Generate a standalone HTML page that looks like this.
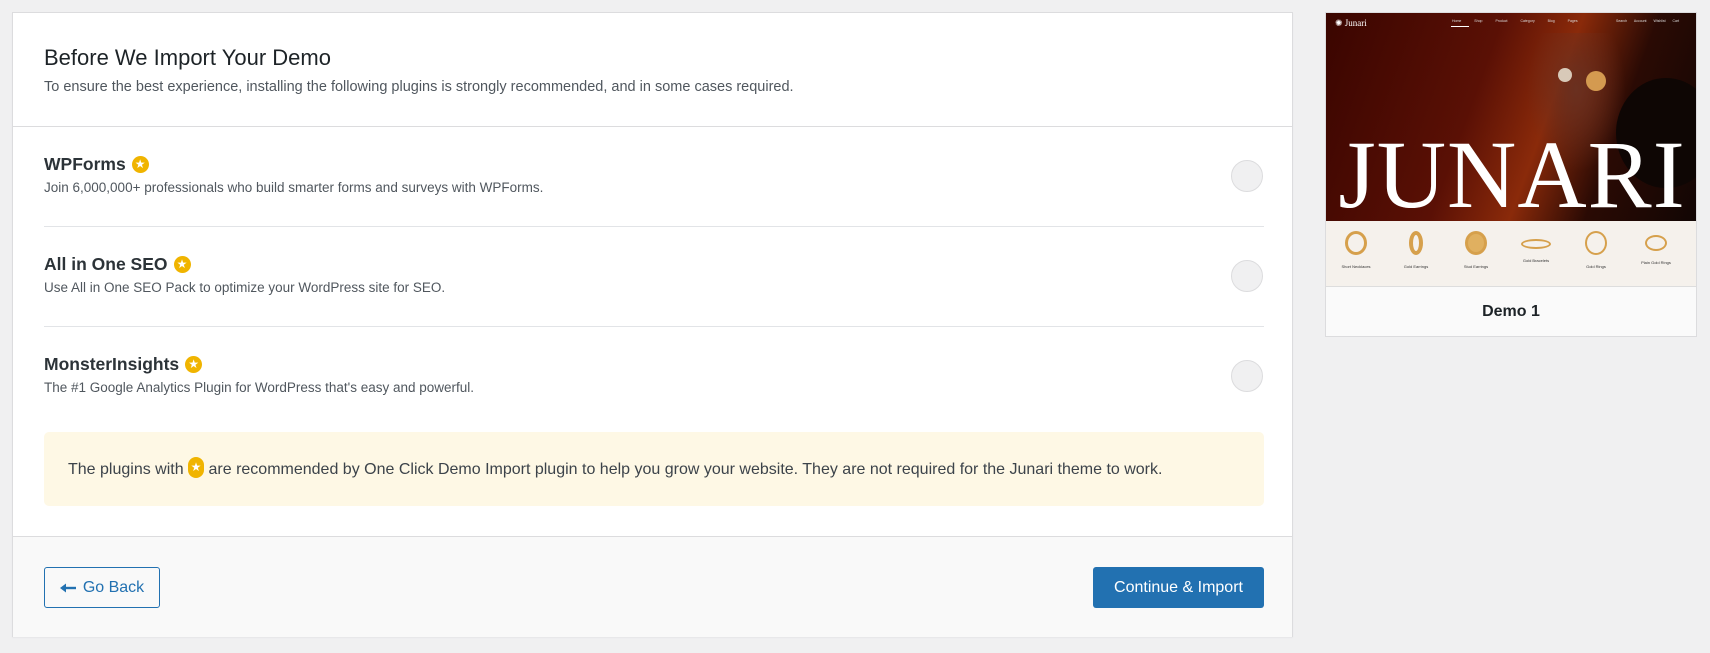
<!DOCTYPE html>
<html><head><meta charset="utf-8"><style>
*{box-sizing:border-box;margin:0;padding:0}
body{width:1710px;height:653px;background:#f0f0f1;font-family:"Liberation Sans",sans-serif;position:relative;overflow:hidden;color:#1d2327}
.panel{position:absolute;left:12px;top:12px;width:1281px;height:625px;background:#fff;border:1px solid #dcdcde;box-shadow:0 1px 1px rgba(0,0,0,.04)}
.abs{position:absolute}
h1{position:absolute;left:31px;top:32px;font-size:22px;font-weight:400;color:#1d2327}
.sub{position:absolute;left:31px;top:66px;font-size:14.5px;color:#50575e}
.hr{position:absolute;height:1px;background:#e2e4e7}
.pt{position:absolute;left:31px;font-size:17.5px;font-weight:bold;color:#2c3338;display:flex;align-items:center;gap:6px}
.pd{position:absolute;left:31px;font-size:13.5px;color:#50575e}
.star{display:inline-block;width:17px;height:17px;border-radius:50%;background:#f0b400;position:relative}
.star:after{content:"★";position:absolute;left:0;right:0;top:1px;text-align:center;color:#fff;font-size:12px;line-height:15px;font-weight:normal}
.radio{position:absolute;left:1218px;width:32px;height:32px;border-radius:50%;background:#f0f0f1;border:1px solid #dcdcde}
.notice{position:absolute;left:31px;top:419px;width:1220px;height:74px;background:#fef8e5;border-radius:5px;font-size:16px;color:#3c434a;padding:25px 0 0 24px}
.notice .star{width:16px;height:21px;border-radius:8px;vertical-align:-4px}
.notice .star:after{top:3px}
.footer{position:absolute;left:0;top:523px;width:1279px;height:101px;background:#f9f9f9;border-top:1px solid #dcdcde}
.btn1{position:absolute;left:31px;top:30px;width:116px;height:41px;border:1px solid #2271b1;border-radius:3px;color:#2271b1;font-size:16px;display:flex;align-items:center;justify-content:center;gap:6px;background:#f9f9f9}
.btn2{position:absolute;left:1080px;top:30px;width:171px;height:41px;background:#2271b1;border-radius:3px;color:#fff;font-size:16px;display:flex;align-items:center;justify-content:center}
.card{position:absolute;left:1325px;top:12px;width:372px;height:325px;background:#fafafa;border:1px solid #dcdcde}
.hero{position:absolute;left:0;top:0;width:370px;height:208px;background:linear-gradient(110deg,#3a0500 0%,#5a1005 40%,#8a2a0a 58%,#2a0a04 75%,#120604 100%);overflow:hidden}
.jun{position:absolute;left:4px;top:112px;width:364px;text-align:center;font-family:"Liberation Serif",serif;color:#fff;font-size:96px;line-height:100px;letter-spacing:1px}
.cream{position:absolute;left:0;top:208px;width:370px;height:66px;background:#f5f1ec;border-bottom:1px solid #ddd}
.it{position:absolute;top:10px;width:40px;text-align:center}
.it i{display:block;margin:0 auto;width:22px;height:24px;border-radius:50%;border:3px solid #d6a04c}
.it b{display:block;font-size:4px;color:#333;margin-top:9px;font-weight:normal;white-space:nowrap}
.demo{position:absolute;left:0;top:274px;width:370px;height:50px;text-align:center;font-size:16px;font-weight:bold;line-height:50px;color:#1d2327}
</style></head><body>
<div class="panel">
<h1>Before We Import Your Demo</h1>
<div class="sub">To ensure the best experience, installing the following plugins is strongly recommended, and in some cases required.</div>
<div class="hr" style="left:0;width:1279px;top:113px;background:#dcdcde"></div>
<div class="pt" style="top:141px">WPForms <span class="star"></span></div>
<div class="pd" style="top:167px">Join 6,000,000+ professionals who build smarter forms and surveys with WPForms.</div>
<div class="radio" style="top:147px"></div>
<div class="hr" style="left:31px;width:1220px;top:213px"></div>
<div class="pt" style="top:241px">All in One SEO <span class="star"></span></div>
<div class="pd" style="top:267px">Use All in One SEO Pack to optimize your WordPress site for SEO.</div>
<div class="radio" style="top:247px"></div>
<div class="hr" style="left:31px;width:1220px;top:313px"></div>
<div class="pt" style="top:341px">MonsterInsights <span class="star"></span></div>
<div class="pd" style="top:367px">The #1 Google Analytics Plugin for WordPress that's easy and powerful.</div>
<div class="radio" style="top:347px"></div>
<div class="notice">The plugins with <span class="star"></span> are recommended by One Click Demo Import plugin to help you grow your website. They are not required for the Junari theme to work.</div>
<div class="footer">
<div class="btn1"><svg width="17" height="10" viewBox="0 0 17 10"><path d="M5 5H16" stroke="#2271b1" stroke-width="2.4"/><path d="M0 5L6 0.5V9.5Z" fill="#2271b1"/></svg>Go Back</div>
<div class="btn2">Continue &amp; Import</div>
</div>
</div>
<div class="card">
<div class="hero">
<div class="abs" style="left:9px;top:5px;color:#fff;font-family:'Liberation Serif',serif;font-size:9px">✺ Junari</div>
<div class="abs" style="left:126px;top:6px;color:#ddd;font-size:3.5px;word-spacing:12px">Home Shop Product Category Blog Pages</div>
<div class="abs" style="left:125px;top:13px;width:18px;height:1px;background:#fff"></div>
<div class="abs" style="left:290px;top:6px;color:#ddd;font-size:3.5px;word-spacing:6px">Search Account Wishlist Cart</div>
<div class="abs" style="left:200px;top:20px;width:100px;height:140px;background:radial-gradient(ellipse at 50% 40%,#6a3020,rgba(40,10,5,0) 70%)"></div>
<div class="abs" style="left:232px;top:55px;width:14px;height:14px;border-radius:50%;background:#d8c9b8"></div>
<div class="abs" style="left:260px;top:58px;width:20px;height:20px;border-radius:50%;background:#d49a50"></div>
<div class="abs" style="left:290px;top:65px;width:100px;height:110px;border-radius:50%;background:#0e0604"></div>
<div class="jun">JUNARI</div>
</div>
<div class="cream">
<div class="it" style="left:10px"><i></i><b>Short Necklaces</b></div>
<div class="it" style="left:70px"><i style="width:14px;border-width:4px"></i><b>Gold Earrings</b></div>
<div class="it" style="left:130px"><i style="background:#e0b060"></i><b>Stud Earrings</b></div>
<div class="it" style="left:190px"><i style="width:30px;height:10px;margin-top:8px;margin-bottom:6px;border-width:2px"></i><b>Gold Bracelets</b></div>
<div class="it" style="left:250px"><i style="border-width:2px"></i><b>Gold Rings</b></div>
<div class="it" style="left:310px"><i style="border-width:2px;height:16px;margin-top:4px;margin-bottom:4px"></i><b>Plain Gold Rings</b></div>
</div>
<div class="demo">Demo 1</div>
</div>
</body></html>
